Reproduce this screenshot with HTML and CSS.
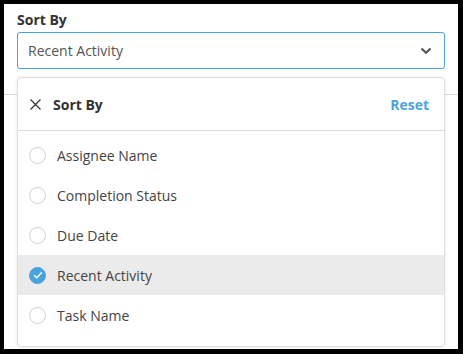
FILE: index.html
```html
<!DOCTYPE html>
<html lang="en">
<head>
  <meta charset="UTF-8">
  <title>Sort By</title>
  <link rel="stylesheet" href="styles.css">
</head>
<body>
  <div class="frame">
    <label class="field-label">Sort By</label>
    <div class="select">
      <span class="select-value">Recent Activity</span>
      <svg class="chevron" width="12" height="8" viewBox="0 0 12 8">
        <path d="M1.5 1.5 L6 5.8 L10.5 1.5" fill="none" stroke="#555" stroke-width="2.2"/>
      </svg>
    </div>
    <hr class="divider">

    <div class="panel">
      <div class="panel-header">
        <svg class="close" width="11" height="11" viewBox="0 0 11 11">
          <path d="M0.5 0.5 L10.5 10.5 M10.5 0.5 L0.5 10.5" stroke="#333" stroke-width="1.2"/>
        </svg>
        <span class="panel-title">Sort By</span>
        <a class="reset">Reset</a>
      </div>
      <ul class="options">
        <li class="option"><span class="radio"></span>Assignee Name</li>
        <li class="option"><span class="radio"></span>Completion Status</li>
        <li class="option"><span class="radio"></span>Due Date</li>
        <li class="option selected">
          <span class="radio checked">
            <svg width="10" height="8" viewBox="0 0 10 8">
              <path d="M1 4.2 L3.8 6.8 L9 1.2" fill="none" stroke="#fff" stroke-width="1.3"/>
            </svg>
          </span>Recent Activity
        </li>
        <li class="option"><span class="radio"></span>Task Name</li>
      </ul>
    </div>
  </div>
</body>
</html>
```

FILE: styles.css
```css
body {
  margin: 0;
  background-color: #000;
  font-family: 'Open Sans', 'Noto Sans', sans-serif;
  font-size: 14px;
}

.frame {
  position: relative;
  box-sizing: border-box;
  width: 454px;
  height: 345px;
  margin: 4px 0 0 4px;
  padding: 6px 13px 0 13px;
  background-color: #fff;
}

.field-label {
  display: block;
  font-weight: 700;
  line-height: 20px;
  color: #333;
}

.select {
  box-sizing: border-box;
  display: flex;
  align-items: center;
  justify-content: space-between;
  height: 37px;
  margin-top: 2px;
  padding: 0 12px 0 10px;
  border: 1px solid #4ba3de;
  border-radius: 3px;
  color: #555;
  line-height: 20px;
}

.chevron {
  display: block;
}

.divider {
  margin: 25px -13px 0 -13px;
  border: none;
  border-top: 1px solid #d6d6d6;
}

.panel {
  position: absolute;
  top: 73px;
  left: 13px;
  box-sizing: border-box;
  width: 428px;
  height: 270px;
  background-color: #fff;
  border: 1px solid #dedede;
  border-radius: 4px;
  box-shadow: 0 1px 4px rgba(0, 0, 0, 0.08);
}

.panel-header {
  display: flex;
  align-items: center;
  height: 52px;
  padding: 0 15px 0 12px;
  border-bottom: 1px solid #d9d9d9;
}

.close {
  display: block;
  margin-right: 12px;
}

.panel-title {
  flex: 1;
  font-weight: 700;
  color: #333;
}

.reset {
  font-weight: 700;
  color: #4ba3de;
  cursor: pointer;
}

.options {
  list-style: none;
  margin: 0;
  padding: 4px 0 0 0;
}

.option {
  display: flex;
  align-items: center;
  height: 40px;
  padding-left: 11px;
  color: #444;
}

.option.selected {
  background-color: #ebebeb;
}

.radio {
  box-sizing: border-box;
  display: flex;
  align-items: center;
  justify-content: center;
  width: 17px;
  height: 17px;
  margin-right: 11px;
  border: 1px solid #cfcfcf;
  border-radius: 50%;
  background-color: #fff;
}

.radio.checked {
  border-color: #4ba3de;
  background-color: #4ba3de;
}
```
